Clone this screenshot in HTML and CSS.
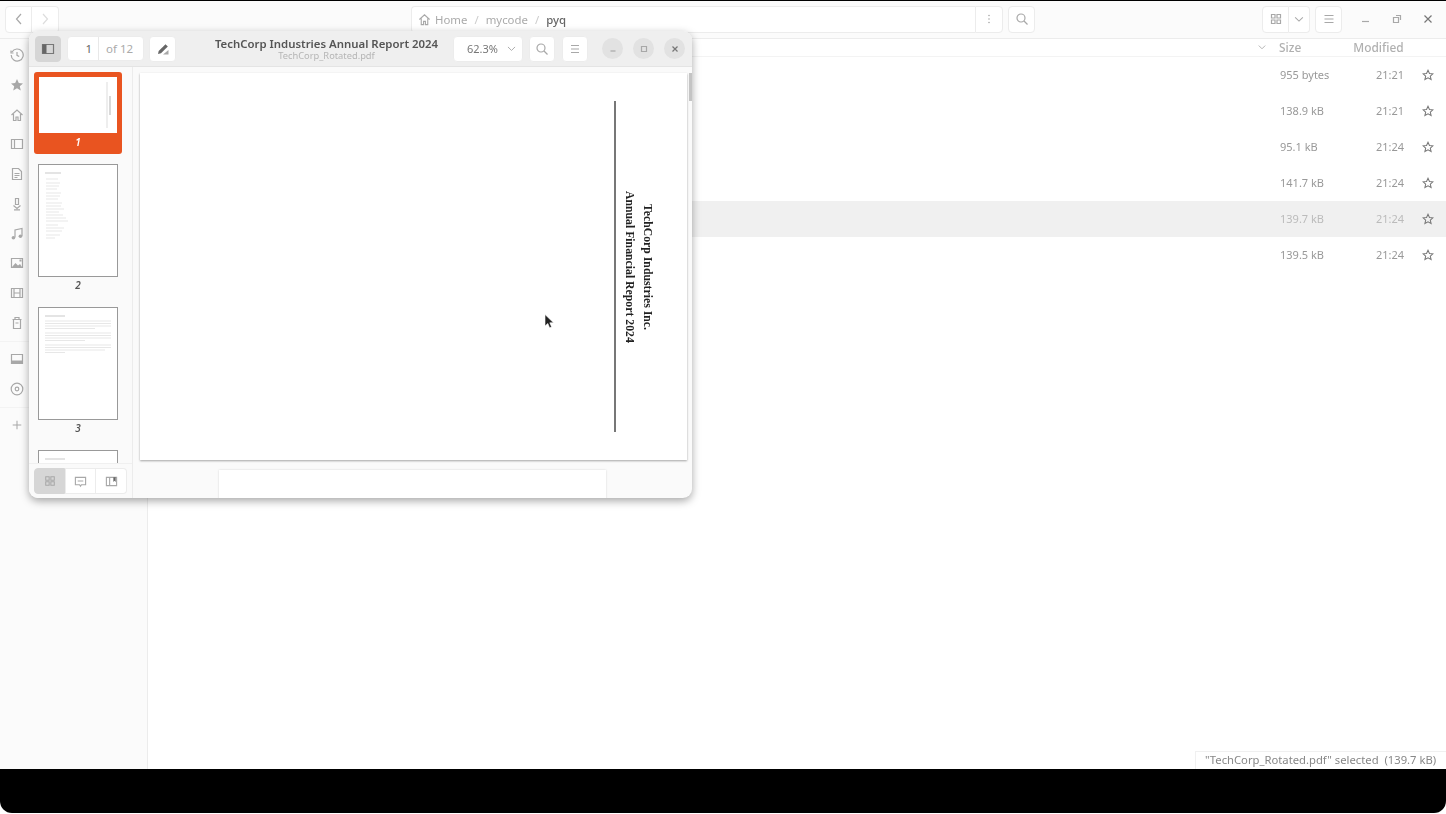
FILE: index.html
```html
<!DOCTYPE html>
<html lang="en">
<head>
    <meta charset="UTF-8">
    <title>TechCorp Industries Annual Report 2024</title>
    <link rel="stylesheet" href="styles.css">
</head>
<body>
<div class="screen">
    <div class="files">
        <div class="files-head">
            <div class="btn-group nav-group">
                <button class="btn"><svg width="14" height="14" viewBox="0 0 14 14"><path d="M9 2 4.500 7 9 12" class="ic"/></svg></button>
                <button class="btn"><svg width="14" height="14" viewBox="0 0 14 14"><path d="M5 2l4.500 5L5 12" class="ic faint"/></svg></button>
            </div>
            <div class="btn-group path">
                <div class="crumbs">
                    <svg width="13" height="13" viewBox="0 0 14 14"><path d="M1.500 7 7 2l5.500 5M3.500 6v6.500h2.500V9h2v3.500h2.500V6" class="ic"/></svg>
                    <span>Home</span><i>/</i><span>mycode</span><i>/</i><b>pyq</b>
                </div>
                <button class="btn path-more"><svg width="14" height="14" viewBox="0 0 14 14"><circle cx="7" cy="3.500" r=".8" class="solid"/><circle cx="7" cy="7" r=".8" class="solid"/><circle cx="7" cy="10.500" r=".8" class="solid"/></svg></button>
            </div>
            <button class="btn square"><svg width="14" height="14" viewBox="0 0 14 14"><circle cx="6" cy="6" r="4" class="ic"/><path d="M9 9l3.500 3.500" class="ic"/></svg></button>
            <div class="btn-group view-group">
                <button class="btn"><svg width="14" height="14" viewBox="0 0 14 14"><path d="M2.500 2.500h3.500v3.500H2.500zM8 2.500h3.500v3.500H8zM2.500 8h3.500v3.500H2.500zM8 8h3.500v3.500H8z" class="ic"/></svg></button>
                <button class="btn"><svg width="12" height="12" viewBox="0 0 14 14"><path d="M2.500 5 7 9.500 11.500 5" class="ic"/></svg></button>
            </div>
            <button class="btn square menu-btn"><svg width="14" height="14" viewBox="0 0 14 14"><path d="M2.500 3.500h9M2.500 7h9M2.500 10.500h9" class="ic"/></svg></button>
            <div class="win-ctl">
                <svg width="12" height="12" viewBox="0 0 12 12"><path d="M2 8.500h7" class="ic"/></svg>
                <svg width="12" height="12" viewBox="0 0 12 12"><path d="M2.500 4.500h5v5h-5zM5 2.500h4.500V7" class="ic"/></svg>
                <svg width="12" height="12" viewBox="0 0 12 12"><path d="M2.500 2.500l7 7M9.500 2.500l-7 7" class="ic dark"/></svg>
            </div>
        </div>
        <div class="files-body">
            <div class="places">
                <svg width="14" height="14" viewBox="0 0 14 14"><path d="M2 4a6 6 0 1 1-.8 3M1 2.500V5h2.500M7 4v3.300l2.200 1.300" class="ic"/></svg>
                <svg width="14" height="14" viewBox="0 0 14 14"><path d="M7 1l1.800 4 4.200.4-3.200 2.800 1 4.300L7 10.200 3.200 12.500l1-4.300L1 5.400 5.200 5z" class="solid"/></svg>
                <svg width="14" height="14" viewBox="0 0 14 14"><path d="M1.500 7 7 2l5.500 5M3.500 6v6.500h2.500V9h2v3.500h2.500V6" class="ic"/></svg>
                <svg width="14" height="14" viewBox="0 0 14 14"><path d="M1.500 2.500h11v9h-11zM1.500 2.500h3v9h-3z" class="ic"/></svg>
                <svg width="14" height="14" viewBox="0 0 14 14"><path d="M2.500 1.500h6l3 3v8h-9zM4.500 6.500h5M4.500 8.500h5M4.500 10.500h3" class="ic"/></svg>
                <svg width="14" height="14" viewBox="0 0 14 14"><path d="M5.500 1.500h3v6h-3zM3.500 8.500 7 11.500l3.500-3M4 12.800h6" class="ic"/></svg>
                <svg width="14" height="14" viewBox="0 0 14 14"><path d="M5 10.500V3l7-1.500V9" class="ic"/><circle cx="3.400" cy="10.800" r="1.800" class="solid"/><circle cx="10.400" cy="9.300" r="1.800" class="solid"/></svg>
                <svg width="14" height="14" viewBox="0 0 14 14"><path d="M1.500 2.500h11v9h-11z" class="ic"/><path d="M2 11l3.500-4 2.500 2.500 2-1.500 2 3zM9.500 3.500h2v2h-2z" class="solid"/></svg>
                <svg width="14" height="14" viewBox="0 0 14 14"><path d="M1.500 2.500h11v9h-11zM4 2.500v9M10 2.500v9M4 7h6" class="ic"/></svg>
                <svg width="14" height="14" viewBox="0 0 14 14"><path d="M2.500 3.500h9M5 3.500v-2h4v2M3.500 3.500v9h7v-9M5.500 7h3" class="ic"/></svg>
                <hr>
                <svg width="14" height="14" viewBox="0 0 14 14"><path d="M1.500 2.500h11v9h-11z" class="ic"/><path d="M1.500 8.500h11v3h-11z" class="solid"/></svg>
                <svg width="14" height="14" viewBox="0 0 14 14"><circle cx="7" cy="7" r="5.800" class="ic"/><circle cx="7" cy="7" r="1.800" class="ic"/></svg>
                <hr>
                <svg width="12" height="12" viewBox="0 0 14 14"><path d="M7 2v10M2 7h10" class="ic"/></svg>
            </div>
            <div class="list">
                <div class="list-head">
                    <svg width="10" height="10" viewBox="0 0 14 14"><path d="M2.500 5 7 9.500 11.500 5" class="ic"/></svg>
                    <span class="col-size">Size</span>
                    <span class="col-mod">Modified</span>
                </div>
                <div class="row"><span class="col-size">955 bytes</span><span class="col-time">21:21</span><svg class="star" width="12" height="12" viewBox="0 0 14 14"><path d="M7 1.500l1.700 3.700 4 .4-3 2.700.9 4L7 10.200l-3.600 2.100.9-4-3-2.700 4-.4z" class="ic dark"/></svg></div>
                <div class="row"><span class="col-size">138.9 kB</span><span class="col-time">21:21</span><svg class="star" width="12" height="12" viewBox="0 0 14 14"><path d="M7 1.500l1.700 3.700 4 .4-3 2.700.9 4L7 10.200l-3.600 2.100.9-4-3-2.700 4-.4z" class="ic dark"/></svg></div>
                <div class="row"><span class="col-size">95.1 kB</span><span class="col-time">21:24</span><svg class="star" width="12" height="12" viewBox="0 0 14 14"><path d="M7 1.500l1.700 3.700 4 .4-3 2.700.9 4L7 10.200l-3.600 2.100.9-4-3-2.700 4-.4z" class="ic dark"/></svg></div>
                <div class="row"><span class="col-size">141.7 kB</span><span class="col-time">21:24</span><svg class="star" width="12" height="12" viewBox="0 0 14 14"><path d="M7 1.500l1.700 3.700 4 .4-3 2.700.9 4L7 10.200l-3.600 2.100.9-4-3-2.700 4-.4z" class="ic dark"/></svg></div>
                <div class="row selected"><span class="col-size">139.7 kB</span><span class="col-time">21:24</span><svg class="star" width="12" height="12" viewBox="0 0 14 14"><path d="M7 1.500l1.700 3.700 4 .4-3 2.700.9 4L7 10.200l-3.600 2.100.9-4-3-2.700 4-.4z" class="ic dark"/></svg></div>
                <div class="row"><span class="col-size">139.5 kB</span><span class="col-time">21:24</span><svg class="star" width="12" height="12" viewBox="0 0 14 14"><path d="M7 1.500l1.700 3.700 4 .4-3 2.700.9 4L7 10.200l-3.600 2.100.9-4-3-2.700 4-.4z" class="ic dark"/></svg></div>
                <div class="status">"TechCorp_Rotated.pdf" selected&nbsp; (139.7 kB)</div>
            </div>
        </div>
    </div>

    <div class="viewer">
        <div class="viewer-head">
            <button class="btn tool active"><svg width="14" height="14" viewBox="0 0 14 14"><path d="M1.500 2.500h11v9h-11z" class="ic dark"/><path d="M1.500 2.500h4v9h-4z" class="solid dark"/></svg></button>
            <div class="btn-group page-box"><span class="page-num">1</span><span class="page-of">of 12</span></div>
            <button class="btn tool edit"><svg width="14" height="14" viewBox="0 0 14 14"><path d="M2 12l.7-3L9.500 2.200l2.300 2.300L5 11.300z" class="solid dark"/><path d="M7 12.500 12.500 8v4.500z" class="solid"/></svg></button>
            <div class="doc-title">
                <strong>TechCorp Industries Annual Report 2024</strong>
                <small>TechCorp_Rotated.pdf</small>
            </div>
            <button class="btn zoom-btn">62.3%<svg width="11" height="11" viewBox="0 0 14 14"><path d="M2.500 5 7 9.500 11.500 5" class="ic"/></svg></button>
            <button class="btn tool"><svg width="14" height="14" viewBox="0 0 14 14"><circle cx="6" cy="6" r="4" class="ic"/><path d="M9 9l3.500 3.500" class="ic"/></svg></button>
            <button class="btn tool"><svg width="14" height="14" viewBox="0 0 14 14"><path d="M3 3.500h8M3 7h8M3 10.500h8" class="ic"/></svg></button>
            <div class="viewer-ctl">
                <span><svg width="10" height="10" viewBox="0 0 10 10"><path d="M2.500 7h5" class="ic"/></svg></span>
                <span><svg width="10" height="10" viewBox="0 0 10 10"><path d="M2.500 2.500h5v5h-5z" class="ic"/></svg></span>
                <span><svg width="10" height="10" viewBox="0 0 10 10"><path d="M2.500 2.500l5 5M7.500 2.500l-5 5" class="ic dark"/></svg></span>
            </div>
        </div>
        <div class="viewer-body">
            <div class="side">
                <div class="thumbs">
                    <div class="thumb current">
                        <div class="sheet first">
                            <svg width="78" height="56" viewBox="0 0 78 56"><path d="M68 5v46" stroke="#ddd" fill="none"/><path d="M71 19v19" stroke="#ccc" stroke-width="1.500" fill="none"/></svg>
                        </div>
                        <em>1</em>
                    </div>
                    <div class="thumb">
                        <div class="sheet">
                            <svg width="78" height="111" viewBox="0 0 78 111"><path d="M6 8h16" stroke="#bbb" stroke-width=".8"/><path d="M7 14h12M7 18h14M7 21h13M7 24h11M7 28h15M7 31h14M7 34h12M7 38h16M7 41h15M7 44h18M7 47h13M7 50h17M7 53h20M7 56h22M7 60h12M7 63h18M7 66h16M7 70h14M7 73h9" stroke="#ddd" stroke-width=".7"/></svg>
                        </div>
                        <em>2</em>
                    </div>
                    <div class="thumb">
                        <div class="sheet">
                            <svg width="78" height="111" viewBox="0 0 78 111"><path d="M6 8h20" stroke="#bbb" stroke-width=".8"/><path d="M6 13h66M6 15.500h66M6 18h66M6 20.500h50M6 25h66M6 27.500h66M6 30h66M6 32.500h40M6 37h66M6 39.500h66M6 42h60M6 44.500h20" stroke="#ddd" stroke-width=".7"/></svg>
                        </div>
                        <em>3</em>
                    </div>
                    <div class="thumb">
                        <div class="sheet">
                            <svg width="78" height="111" viewBox="0 0 78 111"><path d="M6 8h20" stroke="#bbb" stroke-width=".8"/></svg>
                        </div>
                    </div>
                </div>
                <div class="side-foot">
                    <div class="btn-group side-tabs">
                        <button class="btn active"><svg width="12" height="12" viewBox="0 0 14 14"><path d="M2 2h4v4H2zM8 2h4v4H8zM2 8h4v4H2zM8 8h4v4H8z" class="ic"/></svg></button>
                        <button class="btn"><svg width="13" height="13" viewBox="0 0 14 14"><path d="M1.500 2.500h11v8H8l-1 1.500-1-1.500H1.500zM4 6.500h6" class="ic"/></svg></button>
                        <button class="btn"><svg width="13" height="13" viewBox="0 0 14 14"><path d="M1.500 2.500h11v9h-11zM5 2.500v9" class="ic"/><path d="M9 2.500h2.500v5L10.200 6.200 9 7.500z" class="solid dark"/></svg></button>
                    </div>
                </div>
            </div>
            <div class="doc">
                <div class="page">
                    <div class="cover-title">
                        <div>TechCorp Industries Inc.</div>
                        <div>Annual Financial Report 2024</div>
                    </div>
                </div>
                <div class="page next"></div>
                <div class="scrollbar"></div>
            </div>
        </div>
    </div>
    <svg class="pointer" width="10" height="15" viewBox="0 0 10 15"><path d="M1 .5v11.500l2.800-2.500 1.800 4.300 2-.9-1.800-4.100h3.700z" fill="#222" stroke="#fff" stroke-width=".6"/></svg>
</div>
</body>
</html>
```

FILE: styles.css
```css
* {
    box-sizing: border-box;
}

body {
    margin: 0;
    width: 1446px;
    height: 814px;
    overflow: hidden;
    background-color: #fff;
    font-family: "Noto Sans", "Open Sans", sans-serif;
    color: #999;
}

button {
    font: inherit;
    color: inherit;
    padding: 0;
}

.screen {
    position: relative;
    height: 813px;
    padding-top: 1px;
    background-color: #000;
    border-radius: 0 0 12px 12px;
    overflow: hidden;
}

.ic {
    fill: none;
    stroke: #a8a8a8;
    stroke-width: 1.200;
}

.ic.faint {
    stroke: #ddd;
}

.ic.dark {
    stroke: #777;
}

.solid {
    fill: #a8a8a8;
}

.solid.dark {
    fill: #666;
}

.btn {
    display: flex;
    align-items: center;
    justify-content: center;
    background-color: #fff;
    border: 1px solid #ececec;
    border-radius: 4px;
}

.btn-group {
    display: flex;
}

.btn-group .btn {
    border-radius: 0;
}

.btn-group .btn:first-child {
    border-radius: 4px 0 0 4px;
}

.btn-group .btn:last-child {
    border-radius: 0 4px 4px 0;
    border-left: 0;
}

/* file manager */
.files {
    display: flex;
    flex-direction: column;
    height: 768px;
    background-color: #fff;
    filter: blur(0.5px);
}

.files-head {
    display: flex;
    align-items: center;
    flex-shrink: 0;
    height: 38px;
    padding: 0 0 1px 5px;
    background-color: #fbfbfb;
    border-bottom: 1px solid #ececec;
}

.nav-group .btn {
    width: 27px;
    height: 27px;
}

.path {
    width: 592px;
    height: 27px;
    margin-left: 352px;
}

.crumbs {
    display: flex;
    align-items: center;
    flex: 1;
    gap: 6px;
    padding-left: 6px;
    font-size: 11.400px;
    color: #aaa;
    background-color: #fff;
    border: 1px solid #ececec;
    border-right: 0;
    border-radius: 4px 0 0 4px;
}

.crumbs svg {
    margin-right: -2px;
}

.crumbs i {
    font-style: normal;
    color: #ccc;
    padding: 0 1px;
}

.crumbs b {
    font-weight: 500;
    color: #666;
}

.path-more {
    width: 28px;
    border: 1px solid #ececec !important;
}

.square {
    width: 27px;
    height: 27px;
    margin-left: 5px;
}

.view-group {
    margin-left: 227px;
}

.view-group .btn {
    height: 27px;
    width: 27px;
}

.view-group .btn:last-child {
    width: 21px;
}

.menu-btn {
    margin-left: 5px;
}

.win-ctl {
    display: flex;
    gap: 19px;
    margin-left: 18px;
}

.files-body {
    display: flex;
    flex: 1;
    min-height: 0;
}

.places {
    display: flex;
    flex-direction: column;
    align-items: center;
    flex-shrink: 0;
    width: 148px;
    padding: 9px 113px 0 0;
    gap: 15.750px;
    background-color: #fbfbfb;
    border-right: 1px solid #ececec;
}

.places hr {
    align-self: stretch;
    flex-shrink: 0;
    width: 148px;
    height: 1px;
    margin: -5px -113px -5px 0;
    border: 0;
    background-color: #f3f3f3;
}

.list {
    position: relative;
    flex: 1;
    min-width: 0;
    background-color: #fff;
}

.list-head {
    display: flex;
    align-items: center;
    height: 18px;
    padding: 0 0 1px 1109px;
    font-size: 11.900px;
    font-weight: 500;
    color: #b0b0b0;
    border-bottom: 1px solid #f3f3f3;
}

.list-head .col-size {
    margin-left: 12px;
}

.list-head .col-mod {
    margin-left: 52px;
}

.row {
    display: flex;
    align-items: center;
    height: 36px;
    padding: 0 0 1px 1132px;
    font-size: 11px;
    color: #999;
}

.row.selected {
    background-color: #f0f0f0;
    color: #bbb;
}

.row .col-size {
    width: 96px;
}

.row .col-time {
    width: 46px;
}

.status {
    position: absolute;
    right: 0;
    bottom: 0;
    width: 251px;
    height: 18px;
    padding-left: 9px;
    font-size: 11.250px;
    line-height: 16px;
    white-space: nowrap;
    color: #888;
    background-color: #fff;
    border: 1px solid #f0f0f0;
    border-width: 1px 0 0 1px;
}

/* pdf viewer */
.viewer {
    position: absolute;
    left: 29px;
    top: 31px;
    display: flex;
    flex-direction: column;
    width: 663px;
    height: 467px;
    overflow: hidden;
    background-color: #fafafa;
    border-radius: 9px;
    box-shadow: 0 3px 9px rgba(0, 0, 0, 0.35);
    filter: blur(0.5px);
}

.viewer-head {
    display: flex;
    align-items: center;
    flex-shrink: 0;
    height: 36px;
    padding: 0 7px 0 6px;
    background-color: #efefef;
    border-bottom: 1px solid #e4e4e4;
}

.tool {
    width: 26px;
    height: 26px;
}

.tool.edit {
    width: 27px;
}

.tool.active,
.side-tabs .active {
    background-color: #d6d6d6;
    border-color: #d6d6d6;
}

.page-box {
    width: 77px;
    height: 25px;
    margin: 0 5px 0 6px;
    font-size: 11.500px;
    line-height: 23px;
    background-color: #fff;
    border: 1px solid #ececec;
    border-radius: 4px;
}

.page-num {
    width: 31px;
    padding-right: 6px;
    text-align: right;
    color: #666;
    border-right: 1px solid #e8e8e8;
}

.page-of {
    padding-left: 7px;
    color: #aaa;
}

.doc-title {
    display: flex;
    flex-direction: column;
    align-items: center;
    flex: 1;
    min-width: 0;
    padding-left: 24px;
    white-space: nowrap;
}

.doc-title strong {
    font-size: 11.400px;
    font-weight: 600;
    line-height: 13px;
    color: #555;
}

.doc-title small {
    font-size: 9.300px;
    line-height: 11px;
    color: #b5b5b5;
}

.zoom-btn {
    justify-content: flex-start;
    gap: 8px;
    flex-shrink: 0;
    width: 70px;
    height: 26px;
    margin-right: 6px;
    padding-left: 13px;
    font-size: 11px;
    color: #777;
}

.zoom-btn + .tool {
    margin-right: 7px;
}

.viewer-ctl {
    display: flex;
    gap: 10px;
    margin-left: 14px;
}

.viewer-ctl span {
    display: flex;
    align-items: center;
    justify-content: center;
    width: 21px;
    height: 21px;
    border-radius: 50%;
    background-color: #e2e2e2;
}

.viewer-body {
    display: flex;
    flex: 1;
    min-height: 0;
}

.side {
    display: flex;
    flex-direction: column;
    flex-shrink: 0;
    width: 104px;
    border-right: 1px solid #ececec;
    background-color: #fafafa;
}

.thumbs {
    flex: 1;
    min-height: 0;
    overflow: hidden;
    padding: 5px 0 0 5px;
}

.thumb {
    display: flex;
    flex-direction: column;
    align-items: center;
    width: 88px;
    height: 143px;
    padding-top: 5px;
}

.thumb em {
    margin-top: 1px;
    font-size: 10px;
    line-height: 15px;
    font-weight: 600;
    color: #555;
}

.thumb .sheet {
    flex-shrink: 0;
    width: 80px;
    height: 113px;
    background-color: #fff;
    border: 1px solid #999;
}

.thumb.current {
    height: 82px;
    margin-bottom: 5px;
    background-color: #e95420;
    border-radius: 3px;
}

.thumb.current .sheet {
    width: 78px;
    height: 56px;
    border: 0;
}

.thumb.current em {
    margin-top: 2px;
    color: #fff;
}

.sheet svg {
    display: block;
}

.side-foot {
    flex-shrink: 0;
    height: 35px;
    padding: 4px 0 0 5px;
    border-top: 1px solid #f0f0f0;
}

.side-tabs .btn {
    width: 31px;
    height: 26px;
}

.doc {
    position: relative;
    flex: 1;
    min-width: 0;
    overflow: hidden;
    padding: 6px 5px 0 7px;
}

.page {
    display: flex;
    justify-content: flex-end;
    height: 387px;
    padding: 28px 31px 0 0;
    background-color: #fff;
    box-shadow: 0 1px 2px rgba(0, 0, 0, 0.35);
}

.page.next {
    width: 387px;
    margin: 10px 0 0 79px;
    box-shadow: 0 0 2px rgba(0, 0, 0, 0.15);
}

.cover-title {
    width: 42px;
    height: 331px;
    writing-mode: vertical-rl;
    text-align: center;
    font-family: "Liberation Serif", serif;
    font-size: 11.750px;
    font-weight: 700;
    line-height: 18px;
    color: #222;
    border-left: 2px solid #777;
}

.scrollbar {
    position: absolute;
    top: 6px;
    right: 0;
    width: 3px;
    height: 28px;
    background-color: #c4c4c4;
}

.pointer {
    position: absolute;
    left: 544px;
    top: 314px;
}
```
